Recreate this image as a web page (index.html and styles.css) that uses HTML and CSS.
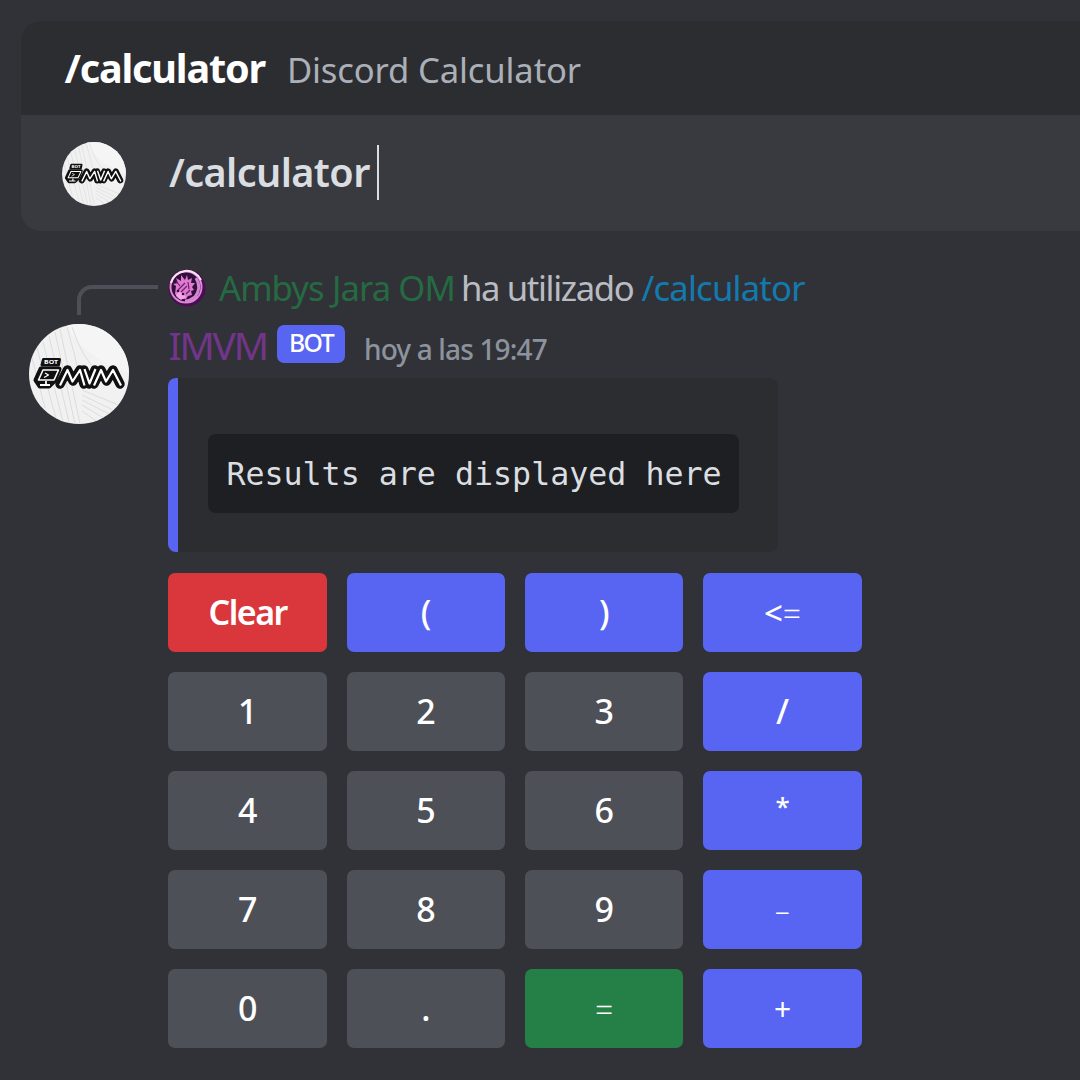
FILE: index.html
```html
<!DOCTYPE html>
<html lang="es">
<head>
<meta charset="utf-8">
<title>Discord Calculator</title>
<link rel="stylesheet" href="styles.css">
</head>
<body>
<svg class="defs" aria-hidden="true">
  <defs>
    <symbol id="bot-avatar" viewBox="0 0 100 100">
      <clipPath id="disc"><circle cx="50" cy="50" r="50"/></clipPath>
      <g clip-path="url(#disc)">
        <rect width="100" height="100" fill="#f1f1f1"/>
        <path d="M38 0 Q48 30 100 49 V0Z" fill="#f5f5f5"/>
        <g fill="none" stroke="#dcdcdc" stroke-width="1">
          <path d="M8 24 28 98M14 18 34 98M20 12 40 98M26 8 46 100M31 5 51 100M38 3 Q46 30 52 60M43 3 Q54 36 68 46M53 66 92 82M53 71 88 88M53 76 84 92M53 81 78 96M53 87 70 99M3 34 16 84"/>
        </g>
        <g transform="translate(0 -1)">
          <g stroke="#101010" fill="#101010" stroke-linejoin="round" stroke-linecap="round">
            <path d="M14.500 36.500H30.500L29.500 42H13Z" stroke-width="3"/>
            <path d="M12 46H30L25 58 20 63H11L7 57Z" stroke-width="5"/>
            <path d="M31 61 38.500 47 44 58 51 47 55 61M55 47 60 61 66 47M65 61 72 47 77.500 58 84 47 91 61" fill="none" stroke-width="9.500"/>
          </g>
          <g fill="none" stroke="#fff" stroke-width="2.200" stroke-linejoin="round">
            <path d="M14 47H29.500L25 57H9.500Z" stroke-width="1.600"/>
            <path d="M17 58V61M11 62H21" stroke-width="1.800"/>
            <path d="M16 50 19.500 52 15 54.500" stroke-width="1.200"/>
            <path d="M31 62.500 38.500 47 43.500 58.500 51 47 55.500 62.500M55.500 46 60.500 60.500 66.500 46M65 62.500 72 47 77 58.500 84 47 92 62.500"/>
          </g>
          <text class="logo-tag" x="15" y="41.2" textLength="14" lengthAdjust="spacingAndGlyphs">BOT</text>
        </g>
      </g>
    </symbol>
  </defs>
</svg>

<section class="composer">
  <div class="suggestion">
    <span class="suggestion-name">/calculator</span>
    <span class="suggestion-desc">Discord Calculator</span>
  </div>
  <div class="entry">
    <svg class="entry-avatar"><use href="#bot-avatar"/></svg>
    <span class="entry-text">/calculator</span>
    <span class="caret"></span>
  </div>
</section>

<article class="message">
  <div class="gutter">
    <div class="spine"></div>
    <svg class="avatar"><use href="#bot-avatar"/></svg>
  </div>
  <div class="content">
    <div class="reply">
      <svg class="reply-avatar" viewBox="0 0 38 38">
        <circle cx="19" cy="19" r="18.5" fill="#4c0b52"/>
        <circle cx="18" cy="18" r="15.500" fill="#31103c" stroke="#d98bd5" stroke-width="2"/>
        <path d="M3 14A16 16 0 0 1 33 11" fill="none" stroke="#fbe3f7" stroke-width="2"/>
        <path d="M28 9Q34 19 27 28Q22 32 17 32" fill="none" stroke="#d685d4" stroke-width="3"/>
        <path d="M7 25 8 17 5 15 10 14 8 9 13 12 13 6 17 11 19 6 20 11 24 9 23 14 27 14 24 18 26 21 23 22 24 26 20 27 18 30 11 30Z" fill="#e07acf"/>
        <path d="M10 21 17 14M13 23 19 17M20 13 21 20M8 12 12 17M22 21 18 25" stroke="#6b2172" stroke-width="1.200"/>
        <path d="M8 27Q10 21 14 24L18 28 13 31Z" fill="#f6a5e8"/>
        <circle cx="10" cy="22" r="1.300" fill="#321039"/><circle cx="15" cy="25" r="1.300" fill="#321039"/>
      </svg>
      <span class="reply-user">Ambys Jara OM</span>
      <span class="reply-verb">ha utilizado</span>
      <span class="reply-command">/calculator</span>
    </div>
    <header class="author">
      <span class="author-name">IMVM</span>
      <span class="badge">BOT</span>
      <time class="time">hoy a las 19:47</time>
    </header>
    <div class="embed"><code class="result">Results are displayed here</code></div>
    <div class="keys">
      <button class="key danger">Clear</button>
      <button class="key primary">(</button>
      <button class="key primary">)</button>
      <button class="key primary"><span class="less">&lt;</span><span class="sign">=</span></button>
      <button class="key">1</button>
      <button class="key">2</button>
      <button class="key">3</button>
      <button class="key primary">/</button>
      <button class="key">4</button>
      <button class="key">5</button>
      <button class="key">6</button>
      <button class="key primary"><span class="star">*</span></button>
      <button class="key">7</button>
      <button class="key">8</button>
      <button class="key">9</button>
      <button class="key primary"><span class="sign minus">-</span></button>
      <button class="key">0</button>
      <button class="key">.</button>
      <button class="key success"><span class="sign">=</span></button>
      <button class="key primary"><span class="plus">+</span></button>
    </div>
  </div>
</article>
</body>
</html>
```
FILE: styles.css
```css
* { box-sizing: border-box; }
body {
  margin: 0;
  width: 1080px;
  height: 1080px;
  overflow: hidden;
  background: #313237;
  color: #dbdee1;
  font-family: "Noto Sans", "Open Sans", sans-serif;
}
.defs { position: absolute; width: 0; height: 0; }
.logo-tag { font: bold 5px "Noto Sans", sans-serif; fill: #fff; }

.composer {
  margin: 21px 0 0 21px;
  height: 210px;
  border-radius: 20px 0 0 20px;
  overflow: hidden;
  background: #383a40;
}
.suggestion {
  display: flex;
  align-items: baseline;
  height: 94px;
  padding: 19.5px 0 0 43.5px;
  background: #2b2d31;
  line-height: 54px;
  white-space: nowrap;
}
.suggestion-name { color: #fff; font-size: 39.6px; font-weight: 700; letter-spacing: -1.2px; }
.suggestion-desc { margin-left: 22px; color: #abb0b8; font-size: 34.65px; letter-spacing: -0.15px; }
.entry {
  display: flex;
  align-items: center;
  height: 116px;
  padding-left: 41px;
}
.entry-avatar { width: 64px; height: 64px; margin-top: 2px; }
.entry-text {
  margin: -2px 0 0 43px;
  font-size: 39.6px;
  font-weight: 600;
  letter-spacing: -0.58px;
  line-height: 54px;
}
.caret { width: 2px; height: 55px; margin: -2px 0 0 7px; background: #dbdee1; }

.message { display: flex; margin-top: 34px; }
.gutter { width: 168.4px; padding: 20px 0 0 29px; }
.spine {
  width: 81px;
  height: 30px;
  margin-left: 48px;
  border-top: 4px solid #4d5058;
  border-left: 4px solid #4d5058;
  border-top-left-radius: 15px;
}
.avatar { display: block; width: 100px; height: 100px; margin-top: 9.4px; }

.reply {
  display: flex;
  align-items: center;
  height: 46px;
  font-size: 34.65px;
  line-height: 46px;
  white-space: nowrap;
}
.reply-avatar { width: 38px; height: 38px; margin-right: 12.5px; }
.reply-user { color: #256b42; letter-spacing: -0.9px; }
.reply-verb { margin-left: 6px; color: #b9bcc2; letter-spacing: -1.35px; }
.reply-command { margin-left: 8px; color: #137ab0; letter-spacing: -0.8px; }

.author { display: flex; align-items: baseline; height: 67px; line-height: 67px; }
.author-name { color: #71368a; font-size: 39px; letter-spacing: -2.2px; }
.badge {
  align-self: flex-start;
  width: 68px;
  height: 38px;
  margin: 14px 0 0 10px;
  border-radius: 7px;
  background: #5865f2;
  color: #fff;
  font-size: 24.75px;
  font-weight: 500;
  letter-spacing: -1.6px;
  line-height: 35px;
  text-align: center;
}
.time {
  margin-left: 19px;
  color: #8d939d;
  font-size: 28px;
  font-weight: 500;
  letter-spacing: -0.85px;
}

.embed {
  width: 610px;
  height: 174px;
  padding: 56px 0 0 29.6px;
  border-left: 10px solid #5865f2;
  border-radius: 8px;
  background: #2b2d31;
}
.result {
  display: flex;
  align-items: center;
  width: 531px;
  height: 79px;
  padding-left: 18.4px;
  border-radius: 8px;
  background: #1e1f22;
  font: 31.65px "DejaVu Sans Mono", monospace;
}

.keys {
  display: grid;
  grid-template-columns: repeat(4, 158.5px);
  grid-auto-rows: 79px;
  gap: 20px 19.8px;
  margin-top: 21px;
}
.key {
  display: flex;
  align-items: center;
  justify-content: center;
  padding: 0 0 1px;
  border: 0;
  border-radius: 7px;
  background: #4e5058;
  color: #fff;
  font: 550 34px "Noto Sans", sans-serif;
}
.primary { background: #5865f2; }
.success { background: #248046; }
.danger { background: #da373c; font-weight: 600; letter-spacing: -1.5px; }
.sign { font-size: 32px; font-weight: 350; }
.less { font-size: 33px; font-weight: 500; }
.minus { transform: scaleX(1.6); }
.star { font-size: 26px; margin-top: -9px; }
.plus { font-size: 30px; font-weight: 450; }
```
